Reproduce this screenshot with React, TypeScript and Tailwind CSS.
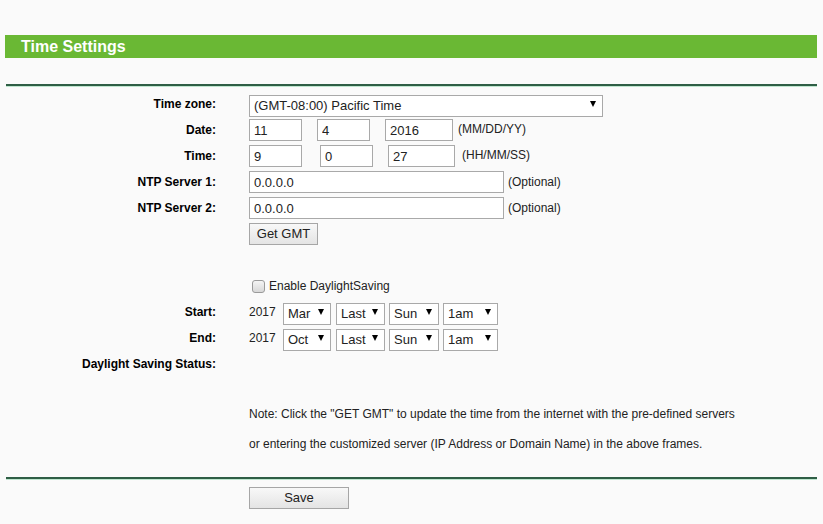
import React from "react";

const font = { fontFamily: '"Liberation Sans", Arial, sans-serif' };

function Label({ children }: { children?: React.ReactNode }) {
  return (
    <div className="w-[211px] shrink-0 text-right text-[12px] font-bold text-black">{children}</div>
  );
}

function Row({
  label,
  className = "",
  children,
}: {
  label?: string;
  className?: string;
  children?: React.ReactNode;
}) {
  return (
    <div className={`flex items-center ${className}`}>
      <Label>{label}</Label>
      <div className="ml-[33px] flex items-center">{children}</div>
    </div>
  );
}

function TextBox({ value, w, className = "" }: { value: string; w: string; className?: string }) {
  return (
    <input
      readOnly
      value={value}
      className={`h-[22px] ${w} border border-[#a9a9a9] bg-white px-[4px] text-[13px] text-[#222] outline-none ${className}`}
    />
  );
}

function Select({ value, w, className = "" }: { value: string; w: string; className?: string }) {
  return (
    <div className={`relative h-[22px] ${w} ${className}`}>
      <select
        value={value}
        onChange={() => {}}
        className="h-full w-full appearance-none border border-[#a9a9a9] bg-white pl-[4px] text-[13px] text-[#222] outline-none"
      >
        <option>{value}</option>
      </select>
      <span className="pointer-events-none absolute right-[7px] top-[8px] h-0 w-0 border-x-[3px] border-t-[6px] border-x-transparent border-t-black" />
    </div>
  );
}

function Hint({ children, className = "" }: { children: React.ReactNode; className?: string }) {
  return <span className={`text-[12px] text-[#222] ${className}`}>{children}</span>;
}

function Button({ children, w }: { children: React.ReactNode; w: string }) {
  return (
    <button
      className={`h-[22px] ${w} border border-[#a6a6a6] bg-gradient-to-b from-[#f8f8f8] to-[#e4e4e4] text-[13px] text-[#222]`}
    >
      {children}
    </button>
  );
}

function Divider({ className = "" }: { className?: string }) {
  return (
    <div className={`mx-[1px] ${className}`}>
      <div className="h-[2px] bg-[#2f5e45]" />
      <div className="h-[1px] bg-[#bfe6cf]" />
    </div>
  );
}

function DstRow({ label, month, className = "" }: { label: string; month: string; className?: string }) {
  return (
    <Row label={label} className={className}>
      <span className="w-[34px] text-[12px] text-[#222]">2017</span>
      <Select value={month} w="w-[48px]" />
      <Select value="Last" w="w-[49px]" className="ml-[5px]" />
      <Select value="Sun" w="w-[50px]" className="ml-[4px]" />
      <Select value="1am" w="w-[55px]" className="ml-[4px]" />
    </Row>
  );
}

export default function App() {
  return (
    <div className="min-h-[524px] bg-[#fafafa] px-[5px] pt-[35px]" style={font}>
      <div className="mr-[1px] flex h-[23px] items-center bg-[#6ab834] pl-[16px] text-[16px] font-bold text-white">
        Time Settings
      </div>
      <Divider className="mt-[26px]" />

      <div className="mt-[6px]">
        <Row label="Time zone:">
          <Select value="(GMT-08:00) Pacific Time" w="w-[354px]" />
        </Row>
        <Row label="Date:" className="mt-[4px]">
          <TextBox value="11" w="w-[53px]" />
          <TextBox value="4" w="w-[53px]" className="ml-[15px]" />
          <TextBox value="2016" w="w-[68px]" className="ml-[15px]" />
          <Hint className="ml-[5px] -mt-[2px]">(MM/DD/YY)</Hint>
        </Row>
        <Row label="Time:" className="mt-[4px]">
          <TextBox value="9" w="w-[53px]" />
          <TextBox value="0" w="w-[53px]" className="ml-[18px]" />
          <TextBox value="27" w="w-[67px]" className="ml-[15px]" />
          <Hint className="ml-[7px] -mt-[2px]">(HH/MM/SS)</Hint>
        </Row>
        <Row label="NTP Server 1:" className="mt-[4px]">
          <TextBox value="0.0.0.0" w="w-[255px]" />
          <Hint className="ml-[4px] -mt-[1px]">(Optional)</Hint>
        </Row>
        <Row label="NTP Server 2:" className="mt-[4px]">
          <TextBox value="0.0.0.0" w="w-[255px]" />
          <Hint className="ml-[4px] -mt-[1px]">(Optional)</Hint>
        </Row>
        <Row className="mt-[4px]">
          <Button w="w-[69px]">Get GMT</Button>
        </Row>

        <Row className="mt-[32px]">
          <span className="ml-[3px] h-[13px] w-[13px] rounded-[3px] border border-[#9a9a9a] bg-gradient-to-b from-[#f4f4f4] to-[#d8d8d8]" />
          <span className="ml-[4px] text-[12px] text-[#222]">Enable DaylightSaving</span>
        </Row>
        <DstRow label="Start:" month="Mar" className="mt-[6px]" />
        <DstRow label="End:" month="Oct" className="mt-[4px]" />
        <Row label="Daylight Saving Status:" className="mt-[6px]" />

        <div className="ml-[244px] mt-[26px] text-[12px] leading-[30px] text-[#222]">
          <p>Note: Click the "GET GMT" to update the time from the internet with the pre-defined servers</p>
          <p>or entering the customized server (IP Address or Domain Name) in the above frames.</p>
        </div>
      </div>

      <Divider className="mt-[18px]" />
      <Row className="mt-[7px]">
        <Button w="w-[100px]">Save</Button>
      </Row>
    </div>
  );
}
